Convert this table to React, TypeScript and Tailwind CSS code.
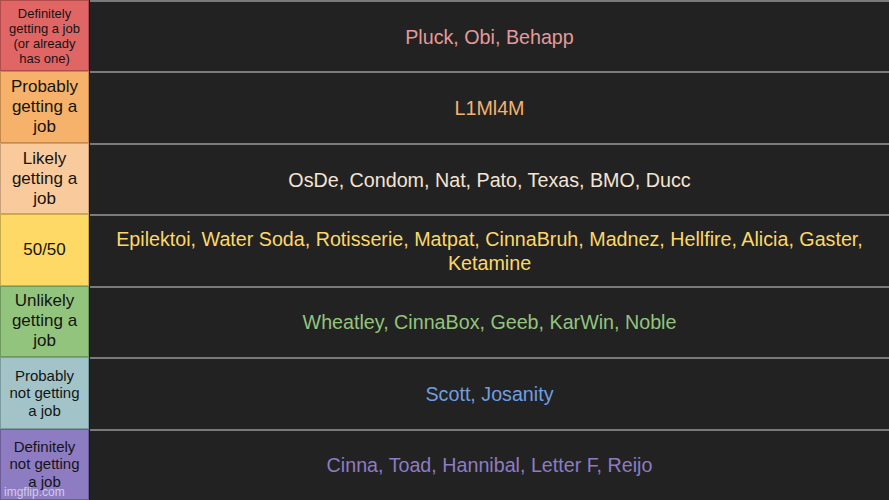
import React from 'react';

interface Tier {
  label: string;
  labelSize: string;
  bg: string;
  border: string;
  textColor: string;
  names: string;
}

const tiers: Tier[] = [
  { label: 'Definitely getting a job (or already has one)', labelSize: 'text-[13px] leading-[15px]', bg: 'bg-[#e06666]', border: 'border-[#b04c4c]', textColor: 'text-[#e49a9a]', names: 'Pluck, Obi, Behapp' },
  { label: 'Probably getting a job', labelSize: 'text-[17px] leading-[20px]', bg: 'bg-[#f6b26b]', border: 'border-[#c48a4d]', textColor: 'text-[#f3b26f]', names: 'L1Ml4M' },
  { label: 'Likely getting a job', labelSize: 'text-[17px] leading-[20px]', bg: 'bg-[#f9cb9c]', border: 'border-[#c9a07a]', textColor: 'text-[#f5e4d3]', names: 'OsDe, Condom, Nat, Pato, Texas, BMO, Ducc' },
  { label: '50/50', labelSize: 'text-[17px] leading-[20px]', bg: 'bg-[#ffd966]', border: 'border-[#c9aa4c]', textColor: 'text-[#fcd868]', names: 'Epilektoi, Water Soda, Rotisserie, Matpat, CinnaBruh, Madnez, Hellfire, Alicia, Gaster, Ketamine' },
  { label: 'Unlikely getting a job', labelSize: 'text-[17px] leading-[20px]', bg: 'bg-[#93c47d]', border: 'border-[#6f9a5d]', textColor: 'text-[#93c47d]', names: 'Wheatley, CinnaBox, Geeb, KarWin, Noble' },
  { label: 'Probably not getting a job', labelSize: 'text-[15px] leading-[17.5px]', bg: 'bg-[#a2c4c9]', border: 'border-[#7b9a9e]', textColor: 'text-[#6f9ee0]', names: 'Scott, Josanity' },
  { label: 'Definitely not getting a job', labelSize: 'text-[15px] leading-[17.5px]', bg: 'bg-[#8e7cc3]', border: 'border-[#6c5d99]', textColor: 'text-[#8e7cc3]', names: 'Cinna, Toad, Hannibal, Letter F, Reijo' },
];

const App: React.FC = () => {
  return (
    <div className="relative w-[889px] h-[500px] bg-[#1a1a1a] flex flex-col overflow-hidden" style={{ fontFamily: '"Liberation Sans", Arial, sans-serif' }}>
      {tiers.map((tier) => (
        <div key={tier.names} className="flex flex-1 min-h-0">
          <div className={`w-[89px] shrink-0 flex items-center justify-center text-center px-1 border ${tier.bg} ${tier.border}`}>
            <span className={`text-[#141414] ${tier.labelSize}`}>{tier.label}</span>
          </div>
          <div className="flex-1 ml-px bg-[#222222] border-t-2 border-[#7a7a7a] flex items-center justify-center text-center px-4">
            <span className={`text-[19.7px] leading-[24px] ${tier.textColor}`}>{tier.names}</span>
          </div>
        </div>
      ))}
      <span className="absolute left-[4px] bottom-[2px] text-[12px] leading-none text-white/60">imgflip.com</span>
    </div>
  );
};

export default App;
